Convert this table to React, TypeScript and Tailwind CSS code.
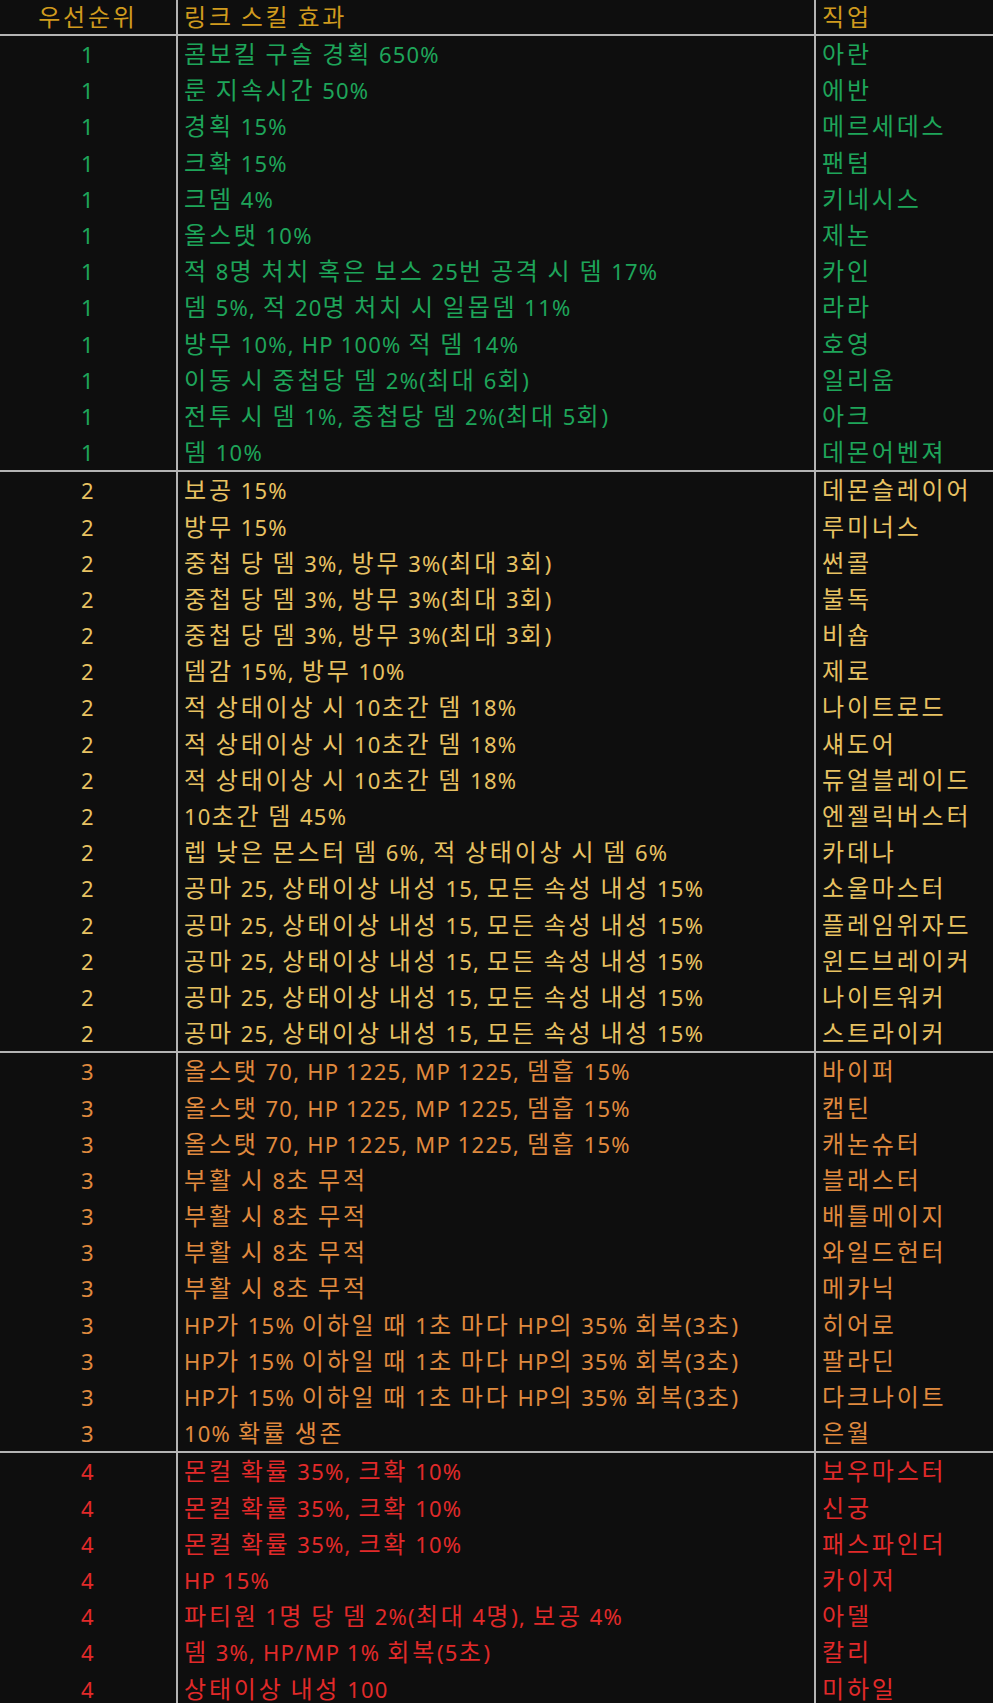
import React from "react";

type Row = [string, string];

const g1: Row[] = [
  ["콤보킬 구슬 경획 650%", "아란"],
  ["룬 지속시간 50%", "에반"],
  ["경획 15%", "메르세데스"],
  ["크확 15%", "팬텀"],
  ["크뎀 4%", "키네시스"],
  ["올스탯 10%", "제논"],
  ["적 8명 처치 혹은 보스 25번 공격 시 뎀 17%", "카인"],
  ["뎀 5%, 적 20명 처치 시 일몹뎀 11%", "라라"],
  ["방무 10%, HP 100% 적 뎀 14%", "호영"],
  ["이동 시 중첩당 뎀 2%(최대 6회)", "일리움"],
  ["전투 시 뎀 1%, 중첩당 뎀 2%(최대 5회)", "아크"],
  ["뎀 10%", "데몬어벤져"],
];
const g2: Row[] = [
  ["보공 15%", "데몬슬레이어"],
  ["방무 15%", "루미너스"],
  ["중첩 당 뎀 3%, 방무 3%(최대 3회)", "썬콜"],
  ["중첩 당 뎀 3%, 방무 3%(최대 3회)", "불독"],
  ["중첩 당 뎀 3%, 방무 3%(최대 3회)", "비숍"],
  ["뎀감 15%, 방무 10%", "제로"],
  ["적 상태이상 시 10초간 뎀 18%", "나이트로드"],
  ["적 상태이상 시 10초간 뎀 18%", "섀도어"],
  ["적 상태이상 시 10초간 뎀 18%", "듀얼블레이드"],
  ["10초간 뎀 45%", "엔젤릭버스터"],
  ["렙 낮은 몬스터 뎀 6%, 적 상태이상 시 뎀 6%", "카데나"],
  ["공마 25, 상태이상 내성 15, 모든 속성 내성 15%", "소울마스터"],
  ["공마 25, 상태이상 내성 15, 모든 속성 내성 15%", "플레임위자드"],
  ["공마 25, 상태이상 내성 15, 모든 속성 내성 15%", "윈드브레이커"],
  ["공마 25, 상태이상 내성 15, 모든 속성 내성 15%", "나이트워커"],
  ["공마 25, 상태이상 내성 15, 모든 속성 내성 15%", "스트라이커"],
];
const g3: Row[] = [
  ["올스탯 70, HP 1225, MP 1225, 뎀흡 15%", "바이퍼"],
  ["올스탯 70, HP 1225, MP 1225, 뎀흡 15%", "캡틴"],
  ["올스탯 70, HP 1225, MP 1225, 뎀흡 15%", "캐논슈터"],
  ["부활 시 8초 무적", "블래스터"],
  ["부활 시 8초 무적", "배틀메이지"],
  ["부활 시 8초 무적", "와일드헌터"],
  ["부활 시 8초 무적", "메카닉"],
  ["HP가 15% 이하일 때 1초 마다 HP의 35% 회복(3초)", "히어로"],
  ["HP가 15% 이하일 때 1초 마다 HP의 35% 회복(3초)", "팔라딘"],
  ["HP가 15% 이하일 때 1초 마다 HP의 35% 회복(3초)", "다크나이트"],
  ["10% 확률 생존", "은월"],
];
const g4: Row[] = [
  ["몬컬 확률 35%, 크확 10%", "보우마스터"],
  ["몬컬 확률 35%, 크확 10%", "신궁"],
  ["몬컬 확률 35%, 크확 10%", "패스파인더"],
  ["HP 15%", "카이저"],
  ["파티원 1명 당 뎀 2%(최대 4명), 보공 4%", "아델"],
  ["뎀 3%, HP/MP 1% 회복(5초)", "칼리"],
  ["상태이상 내성 100", "미하일"],
];

const groups: { n: string; color: string; rows: Row[] }[] = [
  { n: "1", color: "text-[#1ea55a]", rows: g1 },
  { n: "2", color: "text-[#e8c262]", rows: g2 },
  { n: "3", color: "text-[#e08a3e]", rows: g3 },
  { n: "4", color: "text-[#e22a2a]", rows: g4 },
];

function T({ s }: { s: string }) {
  const parts = s.split(/([\uAC00-\uD7A3]+)/).filter((p) => p.length > 0);
  return (
    <>
      {parts.map((p, i) =>
        /[\uAC00-\uD7A3]/.test(p) ? (
          <span key={i} className="text-[24px] tracking-[2.8px]">
            {p}
          </span>
        ) : (
          <span key={i}>{p}</span>
        )
      )}
    </>
  );
}

function Line({ n, color, row }: { n: string; color: string; row: Row }) {
  return (
    <div className={`flex h-[36.2px] items-center ${color}`}>
      <div className="w-[176px] shrink-0 text-center">{n}</div>
      <div className="w-[2px] self-stretch bg-[#b4b4b4]" />
      <div className="w-[636px] shrink-0 pl-[6px] whitespace-nowrap">
        <T s={row[0]} />
      </div>
      <div className="w-[2px] self-stretch bg-[#b4b4b4]" />
      <div className="pl-[6px] whitespace-nowrap">
        <T s={row[1]} />
      </div>
    </div>
  );
}

export default function App() {
  return (
    <div
      className="min-h-[1703px] w-[993px] overflow-hidden bg-[#0e0e0e] text-[22px] leading-none tracking-[1.2px]"
      style={{ fontFamily: '"Noto Sans", "Noto Sans CJK KR", sans-serif' }}
    >
      <div className="flex h-[34px] items-center text-[#d09b1e]">
        <div className="w-[176px] shrink-0 text-center">
          <T s="우선순위" />
        </div>
        <div className="w-[2px] self-stretch bg-[#b4b4b4]" />
        <div className="w-[636px] shrink-0 pl-[6px]">
          <T s="링크 스킬 효과" />
        </div>
        <div className="w-[2px] self-stretch bg-[#b4b4b4]" />
        <div className="pl-[6px]">
          <T s="직업" />
        </div>
      </div>
      {groups.map((grp) => (
        <div key={grp.n}>
          <div className="h-[2px] bg-[#b4b4b4]" />
          {grp.rows.map((r, i) => (
            <Line key={i} n={grp.n} color={grp.color} row={r} />
          ))}
        </div>
      ))}
    </div>
  );
}
